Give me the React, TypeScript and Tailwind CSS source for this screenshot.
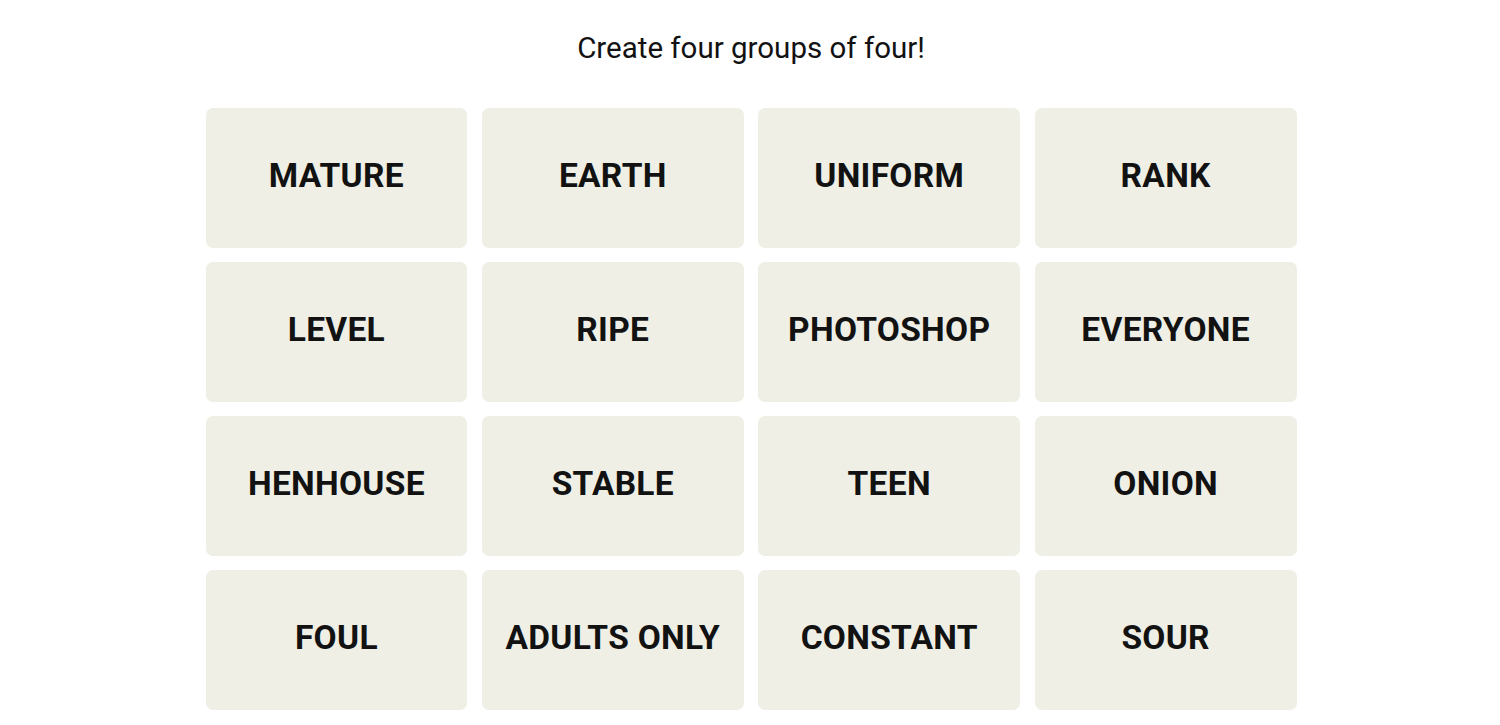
const words = [
  'MATURE', 'EARTH', 'UNIFORM', 'RANK',
  'LEVEL', 'RIPE', 'PHOTOSHOP', 'EVERYONE',
  'HENHOUSE', 'STABLE', 'TEEN', 'ONION',
  'FOUL', 'ADULTS ONLY', 'CONSTANT', 'SOUR',
];

export default function App() {
  return (
    <div className="min-h-screen bg-white font-['Roboto',sans-serif] text-[#121212]">
      <div className="flex justify-center pt-[28px] pl-[2px]">
        <h1 className="text-[29.5px] leading-[40px] font-normal">Create four groups of four!</h1>
      </div>
      <div className="mt-[40px] flex justify-center pl-[2px]">
        <div className="grid w-[1091px] grid-cols-4 gap-x-[14.67px] gap-y-[14px]">
          {words.map((word) => (
            <button
              key={word}
              className="flex h-[140px] items-center justify-center rounded-[7px] bg-[#efefe6] pb-[4px] text-[33.5px] font-bold tracking-[0.3px]"
            >
              {word}
            </button>
          ))}
        </div>
      </div>
    </div>
  );
}
